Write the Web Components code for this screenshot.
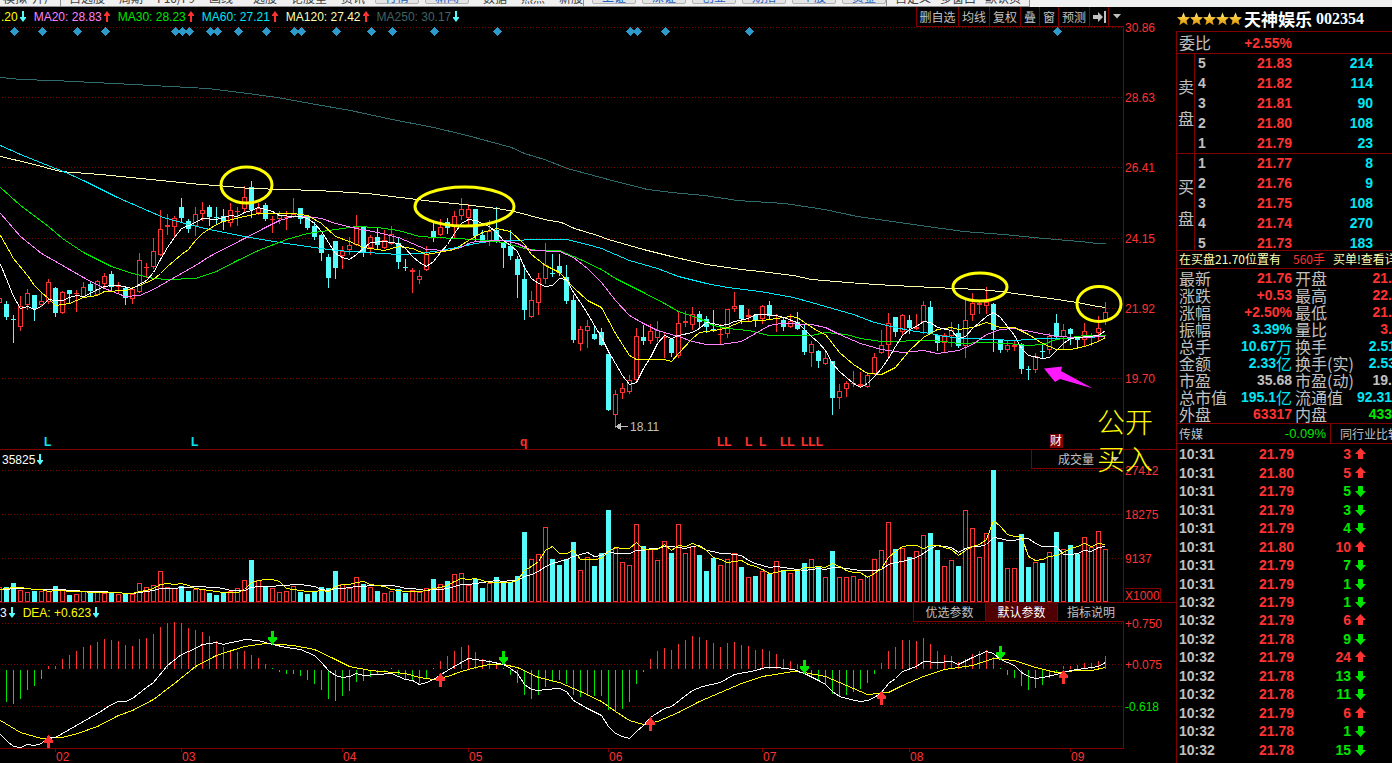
<!DOCTYPE html>
<html lang="zh-CN">
<head>
<meta charset="utf-8">
<title>天神娱乐 002354</title>
<style>
  html { --line: #800000; --red: #ff3232; --green: #00e600; --cyan: #00e6f4; --bar: #54fcfc; --grey: #c0c0c0; --cream: #ffffb4; }
  body { margin: 0; background: #000; color: #c0c0c0; font: 12px/16px "Liberation Sans", "Noto Sans CJK SC", sans-serif; }
</style>
</head>
<body>
<market-app></market-app>
<script>
class Base extends HTMLElement {
  connectedCallback() {
    if (this.shadowRoot) return;
    const t = document.createElement('template');
    t.innerHTML = `<style>*{box-sizing:border-box}${this.css()}</style>${this.html()}`;
    this.attachShadow({ mode: 'open' }).append(t.content.cloneNode(true));
  }
  css() { return ''; }
  html() { return ''; }
}

/* One row per trading day: colour, body top, body bottom, high, low, volume top, macd end */
const DAYS = `r 298 303 298 303 587 0
c 304 317 301 319 587 701
c 319 319 315 342 583 703
r 306 327 296 330 590 698
r 293 305 289 309 592 689
c 295 309 295 320 591 685
r 301 305 292 306 591 678
r 282 302 279 303 591 666
c 288 313 287 316 586 666
r 292 313 291 313 590 659
c 290 294 290 302 595 655
r 293 293 290 311 594 651
r 287 297 282 297 591 647
c 284 291 281 296 591 645
r 281 295 280 295 591 642
r 276 284 273 287 593 639
c 274 287 271 291 593 640
r 286 286 282 293 594 641
c 288 298 287 304 593 645
r 289 299 287 303 594 646
r 260 292 253 292 583 639
r 267 267 263 277 587 638
r 251 267 238 268 585 634
r 229 255 210 255 571 627
r 225 227 214 234 587 623
r 218 227 216 237 588 622
c 207 218 198 221 586 623
c 221 229 219 232 591 628
r 214 226 207 235 589 630
r 210 214 202 220 589 632
c 207 217 205 225 593 636
c 217 217 207 223 595 641
c 216 222 209 229 593 647
r 210 223 203 226 591 650
r 211 211 207 225 588 652
r 197 209 186 211 580 651
c 187 210 181 217 560 655
r 208 213 203 214 580 658
c 205 219 203 220 587 664
r 219 219 216 232 588 669
r 215 219 211 223 592 671
r 217 217 211 229 591 673
r 214 217 198 217 586 673
c 208 219 208 223 592 675
c 216 228 215 229 594 679
c 226 237 222 239 592 683
c 235 253 234 260 587 689
c 257 278 254 287 588 698
c 241 268 241 278 571 700
r 251 256 246 268 584 695
r 245 250 237 254 588 690
r 227 245 215 245 577 681
c 227 253 227 256 584 680
r 237 248 235 254 587 676
c 237 245 228 249 591 674
r 240 248 230 248 593 671
r 234 244 226 244 591 669
c 243 262 237 268 589 674
c 267 267 259 270 593 678
r 270 272 268 292 590 680
r 276 280 270 283 592 682
r 254 270 246 270 588 678
c 231 237 223 241 579 669
r 227 235 219 235 584 661
c 222 228 218 233 581 656
r 216 226 211 238 574 651
r 209 216 198 219 573 647
r 209 218 204 224 585 645
c 209 236 209 240 579 652
c 235 241 230 242 588 659
r 231 241 220 245 583 660
c 230 241 207 242 577 664
c 243 248 243 267 581 669
c 246 256 230 259 582 674
c 259 275 256 297 576 682
c 279 310 265 319 532 694
r 300 317 291 317 559 698
r 278 303 273 314 554 694
r 265 279 243 283 527 686
c 273 273 254 276 559 681
c 266 273 254 275 565 679
c 277 301 265 303 559 683
c 300 340 295 342 542 694
r 329 344 326 350 570 696
r 326 331 320 347 557 695
c 334 339 325 339 566 695
c 332 345 328 345 553 695
c 354 410 354 410 510 709
r 394 415 390 427 548 711
r 388 393 383 398 562 708
r 380 392 375 393 565 701
r 336 380 328 382 524 683
c 337 341 325 344 546 671
r 331 341 324 343 549 659
r 330 338 321 341 560 651
r 337 337 332 357 541 648
c 339 353 338 356 553 650
r 323 356 311 357 524 644
r 321 323 311 326 553 640
r 314 325 307 329 546 636
c 314 322 311 327 555 637
c 319 327 316 332 571 640
c 329 329 310 331 558 643
r 334 334 324 344 565 647
r 309 334 309 337 559 643
r 306 309 292 311 553 642
c 305 319 305 323 567 645
r 315 317 309 320 577 646
c 315 321 315 326 576 650
r 306 319 305 323 571 649
c 305 316 301 319 574 651
r 318 318 314 331 561 654
c 320 327 317 330 570 659
r 321 327 314 327 573 661
c 322 329 312 329 570 664
c 330 352 325 354 563 669
r 344 353 341 366 559 675
c 351 361 350 367 567 679
r 358 364 350 364 577 684
c 361 398 361 414 551 693
r 391 398 384 408 577 695
r 383 389 381 396 577 694
r 383 383 371 386 576 691
r 384 386 372 386 579 688
r 375 387 372 387 576 682
r 357 374 353 374 559 673
r 345 353 330 353 550 663
r 323 345 313 357 522 651
c 317 332 317 336 549 647
r 315 332 314 334 548 640
c 320 328 315 333 557 640
r 327 329 314 329 551 641
r 305 322 301 333 535 638
c 307 333 301 333 533 644
c 335 343 335 350 550 651
r 335 343 333 351 566 655
r 330 336 322 346 560 656
c 333 346 324 347 566 662
r 320 346 300 357 510 659
r 303 315 293 320 528 654
r 303 305 301 313 557 651
r 302 306 287 313 533 650
c 304 330 303 351 470 657
c 340 350 339 352 542 669
r 345 350 341 351 568 674
r 345 347 340 350 568 677
c 344 369 343 373 534 685
c 369 369 366 379 567 689
r 356 370 353 372 562 687
c 351 351 345 357 563 684
r 336 350 333 353 552 677
c 323 336 314 338 532 671
r 330 337 324 349 549 666
c 329 334 328 344 545 666
c 336 340 336 347 554 665
r 331 340 323 346 537 663
r 336 336 333 345 547 663
r 328 333 316 340 531 661
r 312 320 302 324 549 656`.split('\n').map((l, i) => {
  const [k, t, b, h, lo, v, m] = l.split(' ');
  return { x: 7 * i - 1, k, t: +t, b: +b, h: +h, lo: +lo, v: +v, m: +m };
});

const LINES = {
  ma250: ['#2f6a6c', '0,77 20,79 53,80 133,84 170,86 207,88 240,92 277,97 310,103 350,110 387,118 433,127 463,134 511,147 524,153 544,159 567,168 604,178 647,189 671,192 704,195 737,200 784,203 824,209 857,216 920,225 963,231 1003,234 1033,237 1067,240 1080,241 1097,243 1105,243'],
  ma120: ['#ffffb4', '0,156 30,163 60,171 100,174 150,179 200,184 217,185 250,188 317,190 367,193 400,197 433,201 463,204 497,208 514,211 544,219 561,222 574,228 597,235 608,239 643,249 671,256 706,264 741,269 760,271 793,275 811,279 860,283 893,285 933,287 979,289 1000,291 1043,297 1077,302 1097,306 1105,307'],
  ma60: ['#00e6f4', '0,145 20,154 50,166 63,171 83,180 117,197 140,207 163,217 188,224 209,229 244,236 279,242 307,246 335,250 367,252 398,254 419,253 440,250 461,246 475,243 489,241 510,240 538,239 566,239 587,244 601,248 629,260 657,268 678,276 706,283 727,287 760,291 793,297 811,302 832,308 853,314 874,322 895,327 909,330 930,333 944,336 965,338 993,339 1014,340 1042,338 1063,338 1084,337 1105,336'],
  ma30: ['#00e600', '0,187 20,205 48,226 62,238 83,252 111,266 132,273 153,278 167,279 195,278 216,271 237,260 258,250 286,239 307,233 328,230 356,226 377,227 398,230 419,236 454,238 475,239 503,242 524,248 538,250 559,250 580,259 601,269 615,278 643,292 664,303 678,311 699,318 713,325 727,328 748,330 769,335 811,335 825,332 846,334 860,338 881,341 930,340 944,341 958,343 986,342 1007,343 1028,345 1042,344 1056,339 1070,337 1084,335 1105,335'],
  ma20: ['#ff80ff', '0,213 20,236 41,253 62,265 83,277 104,288 125,296 139,295 153,289 167,281 195,265 209,256 244,238 265,227 279,220 293,216 307,216 321,218 335,223 356,228 377,232 398,237 412,243 426,249 447,250 461,247 468,243 475,241 503,240 517,243 531,250 559,251 573,257 587,268 601,282 615,300 629,315 643,323 657,330 678,336 692,341 706,344 720,344 741,341 755,333 769,325 780,323 811,324 825,327 839,334 860,343 881,349 902,352 923,350 937,353 958,350 972,344 986,334 1000,329 1014,328 1035,332 1056,336 1077,337 1105,336'],
  ma10: ['#ffff00', '0,235 13,258 27,275 34,285 41,292 48,298 55,305 69,303 83,297 97,295 104,291 125,290 139,285 153,279 160,273 167,266 174,260 181,254 188,249 195,240 202,233 216,224 223,221 244,216 258,213 293,213 307,215 321,223 335,236 349,241 363,247 384,250 398,246 412,248 426,254 454,249 468,240 482,232 496,228 510,231 524,244 531,254 545,265 559,272 573,287 587,300 601,307 615,333 629,355 636,359 664,359 671,361 678,353 692,338 699,332 720,329 727,327 741,321 762,320 790,316 797,317 804,322 818,331 825,334 839,352 853,364 867,373 881,374 895,367 909,350 923,337 937,329 951,327 958,329 972,327 986,322 1000,327 1014,327 1028,334 1042,343 1056,349 1070,349 1084,346 1098,341 1105,337'],
  ma5: ['#ffffff', '0,264 7,281 13,296 20,308 27,306 34,309 41,306 48,299 55,300 62,300 69,297 76,295 83,296 90,293 97,289 104,286 111,285 118,285 132,288 139,284 146,280 153,272 160,259 167,247 174,237 181,228 188,225 195,222 202,218 216,219 230,215 237,216 244,212 251,210 258,207 265,209 272,211 279,215 293,216 300,216 307,218 314,223 321,231 328,242 335,253 342,257 349,259 356,254 363,248 370,242 384,241 398,243 405,248 412,256 419,262 426,266 433,261 440,252 447,244 454,233 461,223 468,219 475,220 482,223 489,226 496,232 503,240 510,245 517,251 524,267 531,278 538,283 545,286 552,285 559,278 566,279 573,292 580,302 587,313 594,325 601,337 608,351 615,363 622,375 629,384 636,382 643,368 650,357 657,343 664,335 671,338 678,335 692,332 699,328 706,322 713,323 720,325 727,324 734,321 748,318 755,314 762,314 776,315 783,317 797,322 804,329 811,336 818,342 825,350 832,363 839,371 846,377 853,383 860,387 867,383 874,376 881,368 888,358 895,346 902,335 909,329 916,326 923,321 930,322 937,327 951,330 958,338 965,336 972,328 979,322 986,316 993,312 1000,317 1007,326 1014,335 1021,348 1028,355 1042,358 1049,357 1056,350 1063,343 1070,338 1077,337 1098,335 1105,330'],
  dif: ['#ffffff', '0,734 7,741 13,746 20,747 27,744 34,745 41,743 48,737 55,737 69,729 83,721 97,713 111,704 118,701 125,701 132,698 146,687 153,682 167,665 181,654 195,648 202,644 216,642 223,644 230,642 237,641 244,639 258,640 265,642 272,644 286,647 300,649 314,655 321,662 328,670 335,675 342,677 349,676 356,673 363,675 377,674 391,673 405,679 412,680 419,684 426,682 433,679 447,670 461,662 468,658 482,660 489,661 503,664 510,668 517,673 524,684 531,689 538,690 545,689 559,688 566,691 573,700 587,708 601,715 608,726 615,733 622,736 629,738 636,731 643,725 650,717 664,708 671,706 692,690 702,686 720,682 734,674 755,670 765,667 776,667 793,669 804,673 818,680 825,684 832,691 839,696 850,699 860,701 867,700 874,697 881,692 888,683 895,678 902,671 916,666 923,661 937,662 951,661 958,664 972,657 986,651 993,653 1000,659 1014,665 1021,672 1028,676 1035,678 1042,677 1056,674 1070,670 1077,669 1091,667 1098,666 1105,662'],
  dea: ['#ffff00', '0,720 20,732 41,738 62,737 77,733 97,726 118,715 132,710 153,699 174,683 195,666 216,655 244,646 265,643 293,645 314,649 333,658 349,666 370,670 405,673 419,677 433,679 447,676 461,671 475,667 489,664 503,664 517,667 538,677 559,682 580,691 601,701 615,711 629,720 643,724 657,721 678,712 699,701 720,692 741,683 762,676 793,671 804,672 825,676 846,685 867,694 888,692 902,685 923,676 944,669 972,665 993,658 1014,660 1035,667 1056,672 1077,670 1091,670 1105,667']
};

const curve = n => {
  const [c, p] = LINES[n];
  return `<polyline transform="translate(.5 .5)" points="${p}" fill="none" stroke="${c}"/>`;
};
const grid = ys => ys.map(y => `<path d="M2 ${y}.5H1123" stroke="var(--line)" stroke-dasharray="1 2"/>`).join('');
const rect = (x, y, w, h, f) => `<rect x="${x}" y="${y}" width="${w}" height="${h}" fill="${f}"/>`;
const frame = (x, y, w, h) => `<path d="M${x + .5} ${y + .5}h${w - 1}v${h - 1}h${1 - w}z" fill="#000" stroke="var(--red)"/>`;
const scale = rows => rows.map(([y, s, c]) => `<text x="1125" y="${y}" fill="${c || 'var(--red)'}">${s}</text>`).join('');

function candles() {
  return DAYS.map(d => {
    const c = d.k === 'r' ? 'var(--red)' : 'var(--bar)';
    let s = rect(d.x, d.h, 1, d.lo - d.h + 1, c);
    if (d.b - d.t < 3) s += rect(d.x - 2, d.t, 5, Math.max(1, d.b - d.t), c);
    else if (d.k === 'r') s += frame(d.x - 2, d.t, 5, d.b - d.t);
    else s += rect(d.x - 2, d.t, 5, d.b - d.t, c);
    return s;
  }).join('');
}
function volumes() {
  return DAYS.map(d => d.k === 'r' ? frame(d.x - 2, d.v, 5, 602 - d.v) : rect(d.x - 2, d.v, 5, 602 - d.v, 'var(--bar)')).join('');
}
function average(n, colour) {
  const v = Array(n).fill(589).concat(DAYS.map(d => d.v));
  const pts = DAYS.map((d, i) => `${d.x},${Math.round(v.slice(i + 1, i + 1 + n).reduce((a, b) => a + b) / n)}`);
  return `<polyline transform="translate(.5 .5)" points="${pts.join(' ')}" fill="none" stroke="${colour}"/>`;
}
function histogram() {
  return DAYS.filter(d => d.m).map(d => d.m < 669 ? rect(d.x, d.m, 1, 669 - d.m, 'var(--red)')
    : d.m === 669 ? rect(d.x, 668, 1, 1, 'var(--green)') : rect(d.x, 670, 1, d.m - 669, 'var(--green)')).join('');
}

class ToolGroup extends Base {
  css() { return ':host{display:flex;align-items:flex-end;gap:14px;height:6px;white-space:nowrap}'; }
  html() { return '<slot></slot>'; }
}
customElements.define('tool-group', ToolGroup);

class AppToolbar extends Base {
  css() { return `
    :host{display:block;height:7px;overflow:hidden;background:#f0f0f0;color:#404040}
    nav{display:flex;width:1030px;height:7px;border-right:1px solid #909090;border-bottom:1px solid #909090}
    tool-group{padding-left:8px;border-left:1px solid #909090}
    tool-group.first{padding:0 9px 0 3px;gap:5px;border:0;width:60px}
    tool-group.plain{border:0;padding-left:20px}
    tool-group.keys{gap:6px}
    a{color:inherit;text-decoration:none;font:12px/16px "Noto Sans CJK SC",sans-serif}
    button{width:44px;height:20px;margin:0 0 2px;padding:6px 0 0;border:1px solid #b4b4b4;border-radius:2px;background:#e4e4e4;color:#2060c8;font:12px/12px "Noto Sans CJK SC",sans-serif}
    .fill{flex:1}`; }
  html() {
    const links = s => s.split(' ').map(t => `<a href="#">${t}</a>`).join('');
    const keys = s => s.split(' ').map(t => `<button type="button">${t}</button>`).join('');
    return `<nav aria-label="工具栏">
      <tool-group class="first">${links('模拟 开户')}</tool-group>
      <tool-group>${links('自选股 周期 F10/F9 画线')}</tool-group>
      <tool-group class="plain">${links('选股 论股堂 资讯')}</tool-group>
      <tool-group class="plain keys" style="padding-left:10px">${keys('行情 新闻')}</tool-group>
      <tool-group class="plain" style="padding-left:14px">${links('数据 热点 新股')}</tool-group>
      <tool-group class="keys">${keys('上证 深证 创业 期指 个股 资金')}</tool-group>
      <tool-group class="fill" style="gap:9px">${links('自定义 多窗口 默认页')}</tool-group>
    </nav>`;
  }
}
customElements.define('app-toolbar', AppToolbar);

class TrendArrow extends Base {
  css() { return ':host{display:block}svg{display:block}'; }
  html() {
    const up = this.hasAttribute('up');
    const c = this.getAttribute('color') || (up ? 'var(--red)' : 'var(--bar)');
    if (this.hasAttribute('bold'))
      return `<svg width="11" height="12" viewBox="0 0 11 12"><path d="M5.5 0L11 6H8v5H3V6H0z" fill="${c}" ${up ? '' : 'transform="rotate(180 5.5 6)"'}/></svg>`;
    return `<svg width="6" height="12" viewBox="0 0 6 12"><path d="M3 0L6 4V5H4V11H2V5H0V4z" fill="${c}" ${up ? '' : 'transform="rotate(180 3 5.5)"'}/></svg>`;
  }
}
customElements.define('trend-arrow', TrendArrow);

class IndicatorLegend extends Base {
  css() { return ':host{display:flex;gap:8px;align-items:center;white-space:nowrap}::slotted(span){display:flex!important;gap:2px;align-items:center}'; }
  html() { return '<slot></slot>'; }
}
customElements.define('indicator-legend', IndicatorLegend);

const PANEL_CSS = `
  :host{display:block;position:relative;min-height:0;min-width:0;overflow:hidden}
  svg.plot{position:absolute;inset:0;width:100%;height:100%;shape-rendering:crispEdges;font:12px "Liberation Sans",sans-serif}
  header{position:relative;display:flex;justify-content:space-between;align-items:flex-start;margin-right:52px}
  button{margin:0;padding:0;border:0;background:#000;color:#c0c0c0;font:12px/18px "Noto Sans CJK SC",sans-serif}
  indicator-legend{height:20px}`;
const plot = (y, h, body) => `<svg class="plot" viewBox="0 ${y} 1176 ${h}" preserveAspectRatio="xMaxYMin slice">${body}<path d="M1123.5 ${y}V${y + h}" stroke="var(--line)"/></svg>`;

class PricePanel extends Base {
  css() { return PANEL_CSS + `
    indicator-legend{padding-left:1px}
    .tools{display:flex;height:20px;border-bottom:1px solid var(--line)}
    .tools button{border-left:1px solid var(--line);width:31px;height:19px}
    .tools .w3{width:42px}.tools .w1{width:19px}.tools .mini{width:16px}
    .tools svg{display:block;margin:0 auto}`; }
  html() {
    const leg = [['#ffff00', '.20', 0], ['#ff80ff', 'MA20: 28.83', 1], ['#00e600', 'MA30: 28.23', 1], ['#00e6f4', 'MA60: 27.21', 1], ['#ffffb4', 'MA120: 27.42', 1], ['#406464', 'MA250: 30.17', 0]]
      .map(([c, t, u]) => `<span style="color:${c}">${t}<trend-arrow ${u ? 'up' : ''}></trend-arrow></span>`).join('');
    const dia = [14, 42, 77, 105, 175, 182, 189, 210, 217, 238, 266, 294, 301, 336, 371, 392, 434, 497, 630, 637, 665, 749, 1057]
      .map(x => `<path d="M${x + .5} 27L${x + 5} 31.5L${x + .5} 36L${x - 4} 31.5z" fill="#2c9acb"/>`).join('');
    const marks = [[44, 'L', 'var(--cyan)'], [191, 'L', 'var(--cyan)'], [520, 'q'], [717, 'LL'], [745, 'L'], [759, 'L'], [780, 'LL'], [801, 'LLL']]
      .map(([x, t, c]) => `<text x="${x}" y="446" font-weight="bold" fill="${c || 'var(--red)'}">${t}</text>`).join('');
    const rings = [[246.5, 185, 25.5, 18], [464.5, 206.5, 49.5, 19.5], [980, 287, 27, 14], [1099, 304, 22, 17.5]]
      .map(([x, y, a, b]) => `<ellipse cx="${x}" cy="${y}" rx="${a}" ry="${b}" fill="none" stroke="#ff0" stroke-width="3" shape-rendering="auto"/>`).join('');
    const body = grid([27, 97, 167, 238, 308, 378]) + dia + candles() + ['ma250', 'ma120', 'ma60', 'ma30', 'ma20', 'ma10', 'ma5'].map(curve).join('')
      + rings + marks
      + '<path d="M1044 368.500L1062 366.500L1061 371L1093 388.500L1060 379L1055 382z" fill="#ff19ff" shape-rendering="auto"/>'
      + '<path d="M616 426.500H628M616 426.500L620 424V429z" fill="#c0c0c0" stroke="#c0c0c0"/><text x="630" y="431" fill="#c0c0c0">18.11</text>'
      + '<rect x="1050" y="434" width="13" height="14" fill="#800000"/><text x="1050" y="445" fill="#fff" font-family="Noto Sans CJK SC">财</text>'
      + scale([[32, '30.86'], [102, '28.63'], [172, '26.41'], [243, '24.15'], [313, '21.92'], [383, '19.70']])
      + '<path d="M0 449.500H1176" stroke="var(--line)"/>';
    return plot(7, 443, body) + `<header><indicator-legend>${leg}</indicator-legend>
      <div class="tools"><button type="button" class="w3">删自选</button><button type="button">均线</button><button type="button">复权</button><button type="button" class="w1">叠</button><button type="button" class="w1">窗</button><button type="button">预测</button><button type="button" class="w1" aria-label="跳到最新"><svg width="13" height="12" viewBox="0 0 13 12"><path d="M0 4h5V1l5 5-5 5V8H0zM11 0h2v12h-2z" fill="#c0c0c0"/></svg></button><button type="button" class="mini" aria-label="更多"><svg width="8" height="5" viewBox="0 0 8 5"><path d="M0 0h8L4 4.500z" fill="#c0c0c0"/></svg></button></div></header>`;
  }
}
customElements.define('price-panel', PricePanel);

class VolumePanel extends Base {
  css() { return PANEL_CSS + `
    indicator-legend{padding-left:2px;color:#fff}
    .pick{display:flex;align-items:center;justify-content:flex-end;gap:17px;width:93px;height:19px;padding-right:4px;border:solid var(--line);border-width:0 1px 1px 1px}`; }
  html() {
    const body = grid([470, 514, 558]) + volumes() + average(10, '#fff') + average(5, '#ff0')
      + scale([[475, '27412'], [519, '18275'], [563, '9137'], [600, 'X1000']])
      + '<path d="M1124.500 588.500H1160.500V602M0 602.500H1176" fill="none" stroke="var(--line)"/>';
    return plot(450, 153, body) + `<header><indicator-legend><span>35825<trend-arrow></trend-arrow></span></indicator-legend>
      <button type="button" class="pick">成交量<svg width="8" height="5" viewBox="0 0 8 5"><path d="M0 0h8L4 4.500z" fill="#c0c0c0"/></svg></button></header>`;
  }
}
customElements.define('volume-panel', VolumePanel);

class MacdPanel extends Base {
  css() { return PANEL_CSS + `
    .tabs{display:flex;border-bottom:1px solid var(--line)}
    .tabs button{width:72px;height:18px;border-left:1px solid var(--line)}
    .tabs button:last-child{width:67px}
    .tabs [aria-selected=true]{background:#500000;color:#fff}`; }
  html() {
    const down = [[272, 631], [503, 651], [804, 660], [1000, 646]].map(([x, y]) => `<path d="M${x - 1} ${y}h3v6h3v2l-4.500 6-4.500-6v-2h3z" fill="var(--green)"/>`).join('');
    const up = [[48, 735], [440, 673], [650, 717], [881, 691], [1063, 670]].map(([x, y]) => `<path d="M${x - 1} ${y + 14}h3v-6h3v-2l-4.500-6-4.500 6v2h3z" fill="var(--red)"/>`).join('');
    const body = grid([623, 664, 706]) + histogram() + curve('dea') + curve('dif') + down + up
      + scale([[628, '+0.750'], [669, '+0.075'], [711, '-0.618', 'var(--green)']]);
    return plot(603, 145, body) + `<header><indicator-legend><span style="color:#fff">3<trend-arrow></trend-arrow></span><span style="color:#ff0">DEA: +0.623<trend-arrow></trend-arrow></span></indicator-legend>
      <div class="tabs" role="tablist"><button type="button" role="tab">优选参数</button><button type="button" role="tab" aria-selected="true">默认参数</button><button type="button" role="tab">指标说明</button></div></header>`;
  }
}
customElements.define('macd-panel', MacdPanel);

class DateAxis extends Base {
  css() { return PANEL_CSS; }
  html() {
    const t = [[55, '02'], [181, '03'], [342, '04'], [468, '05'], [608, '06'], [762, '07'], [909, '08'], [1070, '09']]
      .map(([x, s]) => `<path d="M${x}.5 748v4" stroke="var(--line)"/><text x="${x + 1}" y="761" fill="var(--red)">${s}</text>`).join('');
    return `<svg class="plot" viewBox="0 748 1176 15" preserveAspectRatio="xMaxYMin slice"><path d="M0 748.500H1124" stroke="var(--line)"/>${t}</svg>`;
  }
}
customElements.define('date-axis', DateAxis);

class StarRating extends Base {
  css() { return ':host{display:flex}svg{display:block}'; }
  html() {
    return '<svg width="13" height="14" viewBox="0 0 13 14"><defs><linearGradient id="g" x2="0" y2="1"><stop offset="0" stop-color="#ffe9a0"/><stop offset=".5" stop-color="#f6c02c"/><stop offset="1" stop-color="#d08a10"/></linearGradient></defs><path d="M6.500 .5L8.400 5 13 5.300 9.500 8.500 10.700 13.200 6.500 10.600 2.300 13.200 3.500 8.500 0 5.300 4.600 5z" fill="url(#g)"/></svg>'.repeat(5);
  }
}
customElements.define('star-rating', StarRating);

class OrderBook extends Base {
  css() { return `
    :host{display:grid;grid-template-columns:18px 1fr;box-shadow:inset 0 1px var(--line);font:bold 14px/20px "Liberation Sans",sans-serif}
    h3{display:flex;flex-direction:column;gap:16px;margin:0;padding:25px 0 0 1px;border-right:1px solid var(--line);font:16px/16px "Noto Sans CJK SC",sans-serif}
    table{display:block;height:0}
    tbody{display:block}
    tr{display:grid;grid-template-columns:20px 74px 1fr;height:20px;padding:0 19px 0 3px}
    td,th{padding:0;text-align:right;color:var(--red)}
    th{text-align:left;color:var(--grey)}
    td:last-child{color:var(--cyan)}`; }
  html() {
    const rows = this.getAttribute('rows').split(';').map(r => r.split(' '));
    return `<h3>${[...this.getAttribute('side')].map(c => `<span>${c}</span>`).join('')}</h3><table><tbody>${rows.map(([a, b, c]) => `<tr><th scope="row">${a}</th><td>${b}</td><td>${c}</td></tr>`).join('')}</tbody></table>`;
  }
}
customElements.define('order-book', OrderBook);

class QuoteStats extends Base {
  css() { return `
    :host{display:block;padding:1px 0 0 2px;border-top:1px solid var(--line);height:155px;overflow:hidden}
    table,tbody{display:block}
    tr{display:grid;grid-template-columns:auto 1fr 58px 39px;height:17px;white-space:nowrap}
    th,td{padding:0}
    th{font:16px/16px "Noto Sans CJK SC",sans-serif;text-align:left;color:var(--grey)}
    td{font:bold 14px/17px "Liberation Sans","Noto Sans CJK SC",sans-serif;display:flex;justify-content:flex-end}
    td:nth-child(2){padding-right:3px}
    td i{font:16px/16px "Noto Sans CJK SC",sans-serif}
    .r{color:var(--red)}.c{color:var(--cyan)}.g{color:var(--green)}.w{color:var(--grey)}
    .cut{margin-right:-4px}`; }
  html() {
    const rows = [['最新', 'r', '21.76', '开盘', 'r', '21.'], ['涨跌', 'r', '+0.53', '最高', 'r', '22.'], ['涨幅', 'r', '+2.50%', '最低', 'r', '21.'], ['振幅', 'c', '3.39%', '量比', 'r', '3.'],
      ['总手', 'c', '10.67<i>万</i>', '换手', 'c cut', '2.51'], ['金额', 'c', '2.33<i>亿</i>', '换手(实)', 'c cut', '2.53'], ['市盈', 'w', '35.68', '市盈(动)', 'w', '19.'], ['总市值', 'c', '195.1<i>亿</i>', '流通值', 'c', '92.31'], ['外盘', 'r', '63317', '内盘', 'g', '433']];
    return `<table><tbody>${rows.map(([a, k, b, c, l, d]) => `<tr><th scope="row">${a}</th><td class="${k}">${b}</td><th scope="row">${c}</th><td class="${l}">${d}</td></tr>`).join('')}</tbody></table>`;
  }
}
customElements.define('quote-stats', QuoteStats);

class TickList extends Base {
  css() { return `
    :host{display:grid;min-height:0;padding:1px 26px 4px 2px;border-top:1px solid var(--line);font:bold 14px/18px "Liberation Sans",sans-serif}
    table{display:grid;min-height:0}
    tbody{display:grid;grid-auto-rows:1fr;min-height:0}
    tr{display:grid;grid-template-columns:40px 75px 1fr 15px;align-items:center}
    td{padding:0;text-align:right}
    td:first-child{text-align:left;color:var(--grey)}
    td:nth-child(2){color:var(--red)}
    td:last-child{display:flex;justify-content:flex-end}
    .u{color:var(--red)}.d{color:var(--green)}`; }
  html() {
    const rows = '10:31 21.79 3 u;10:31 21.80 5 u;10:31 21.79 5 d;10:31 21.79 3 d;10:31 21.79 4 d;10:31 21.80 10 u;10:31 21.79 7 d;10:31 21.79 1 d;10:32 21.79 1 d;10:32 21.79 6 u;10:32 21.78 9 d;10:32 21.79 24 u;10:32 21.78 13 d;10:32 21.78 11 d;10:32 21.79 6 u;10:32 21.78 1 d;10:32 21.78 15 d'.split(';').map(r => r.split(' '));
    return `<table><tbody>${rows.map(([t, p, v, k]) => `<tr><td>${t}</td><td>${p}</td><td class="${k}">${v}</td><td><trend-arrow bold ${k === 'u' ? 'up color="var(--red)"' : 'color="var(--green)"'}></trend-arrow></td></tr>`).join('')}</tbody></table>`;
  }
}
customElements.define('tick-list', TickList);

class QuotePanel extends Base {
  css() { return `
    :host{display:grid;grid-template-rows:24px 1fr;min-width:0;min-height:0;overflow:hidden}
    h1{display:flex;align-items:center;margin:0;padding-left:1px;color:#fff;font:bold 17px/22px "Noto Sans CJK SC",sans-serif;white-space:nowrap}
    h1 star-rating{margin-right:2px}
    h1 .code{margin-left:4px;font:bold 16px/22px "Liberation Serif",serif}
    .body{display:grid;grid-template-rows:22px 100px 97px 18px 155px 20px 1fr;border:solid var(--line);border-width:0 0 0 1px;min-height:0;min-width:0}
    .ratio{display:grid;grid-template-columns:32px 81px;padding-left:2px;font:16px/20px "Noto Sans CJK SC",sans-serif}
    .ratio b{color:var(--red);font:bold 14px/23px "Liberation Sans",sans-serif;text-align:right}
    .top{border-top:1px solid var(--line)}
    .alert{display:flex;gap:8px;padding-left:2px;color:var(--cream);font:12px/16px "Noto Sans CJK SC",sans-serif;white-space:nowrap;overflow:hidden}
    .alert em{padding-left:4px;font-style:normal;color:var(--red)}
    .alert a,.sector a{color:inherit;text-decoration:none}
    .sector{display:grid;grid-template-columns:1fr auto 62px;align-items:center;padding-left:2px;font:12px/19px "Noto Sans CJK SC",sans-serif;white-space:nowrap;overflow:hidden}
    .sector b{padding-right:4px;color:var(--green);font:13px/19px "Liberation Sans",sans-serif}
    .sector a{height:19px;padding-left:9px;border-left:1px solid var(--line);overflow:hidden}`; }
  html() {
    return `<h1><star-rating aria-label="五星"></star-rating>天神娱乐<span class="code">002354</span></h1>
      <div class="body">
        <div class="ratio top"><span>委比</span><b>+2.55%</b></div>
        <order-book side="卖盘" rows="5 21.83 214;4 21.82 114;3 21.81 90;2 21.80 108;1 21.79 23"></order-book>
        <order-book side="买盘" rows="1 21.77 8;2 21.76 9;3 21.75 108;4 21.74 270;5 21.73 183"></order-book>
        <div class="alert top"><span>在买盘21.70位置有</span><em>560手</em><a href="#">买单!查看详</a></div>
        <quote-stats></quote-stats>
        <div class="sector top"><span>传媒</span><b>-0.09%</b><a href="#">同行业比较</a></div>
        <tick-list></tick-list>
      </div>`;
  }
}
customElements.define('quote-panel', QuotePanel);

class MarketApp extends Base {
  css() { return `
    :host{display:grid;grid-template-rows:7px 1fr;height:100vh;min-height:700px}
    main{display:grid;grid-template-columns:1fr 216px;min-height:0}
    .charts{position:relative;display:grid;grid-template-rows:443fr 153fr 145fr 15fr;min-width:0;min-height:0}
    .note{position:absolute;right:23px;top:396px;z-index:2;margin:0;color:#ff0;font:300 28px/37px "Noto Sans CJK SC",sans-serif;pointer-events:none}`; }
  html() {
    return `<app-toolbar></app-toolbar><main>
      <section class="charts"><price-panel></price-panel><volume-panel></volume-panel><macd-panel></macd-panel><date-axis></date-axis><p class="note">公开<br>买入</p></section>
      <quote-panel></quote-panel></main>`;
  }
}
customElements.define('market-app', MarketApp);
</script>
</body>
</html>
